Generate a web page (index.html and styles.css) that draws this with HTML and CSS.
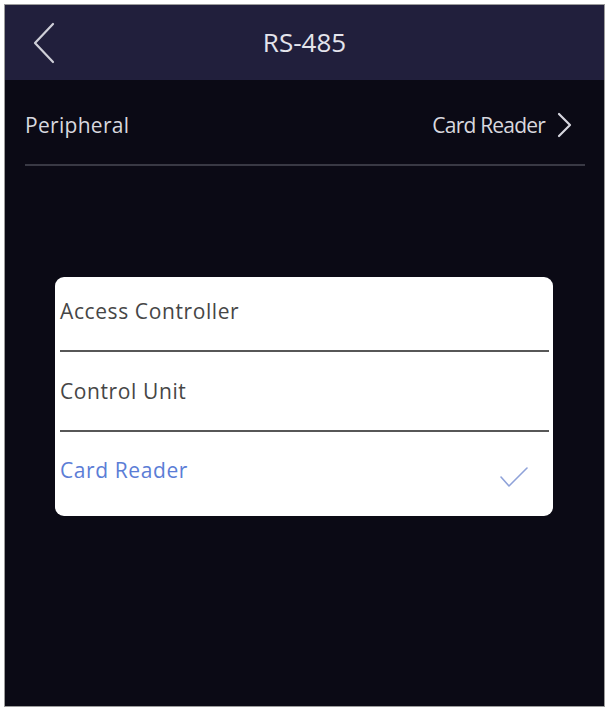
FILE: index.html
```html
<!DOCTYPE html>
<html lang="en">
<head>
	<meta charset="UTF-8">
	<title>RS-485</title>
	<link rel="stylesheet" href="styles.css">
</head>
<body>

	<div class="screen">
		<div class="topbar">
			<span class="back">
				<svg width="24" height="42" viewBox="0 0 24 42"><path d="M21 2 L3 21 L21 40" fill="none" stroke="#cfcfd8" stroke-width="2.2" stroke-linecap="round" stroke-linejoin="round"/></svg>
			</span>
			<span class="title">RS-485</span>
		</div>

		<div class="setting">
			<span class="label">Peripheral</span>
			<span class="value"><span>Card Reader</span>
				<svg width="16" height="26" viewBox="0 0 16 26"><path d="M2 2 L13 13 L2 24" fill="none" stroke="#d6d6de" stroke-width="2.2" stroke-linecap="round" stroke-linejoin="round"/></svg>
			</span>
		</div>
		<div class="line"></div>

		<!-- 选择外设 -->
		<div class="picker">
			<div class="option">Access Controller</div>
			<div class="option">Control Unit</div>
			<div class="option on">Card Reader
				<svg width="30" height="24" viewBox="0 0 30 24"><path d="M2 12 L10 21 L28 3" fill="none" stroke="#8fa2d9" stroke-width="1.6" stroke-linecap="round" stroke-linejoin="round"/></svg>
			</div>
		</div>
	</div>

</body>
</html>
```

FILE: styles.css
```css
html,body{margin: 0;padding: 0;background: #fff;}
body{padding: 4px 4px 2px 4px;font-family: "Open Sans", "Noto Sans", sans-serif;}
.screen{height: 703px;box-sizing: border-box;border: 1px solid #9c9c9c;background: #0b0a15;display: flex;flex-direction: column;}

.topbar{height: 75px;background: #211f3c;display: flex;align-items: center;position: relative;}
.topbar .back{position: absolute;left: 27px;top: 17px;}
.topbar .title{flex: 1;text-align: center;color: #e4e4ec;font-size: 26px;margin-top: -2px;}

.setting{height: 78px;padding: 6px 31px 0 20px;display: flex;align-items: center;justify-content: space-between;color: #d8d8df;font-size: 21px;}
.setting .label{letter-spacing: 0.3px;}
.setting .value{display: flex;align-items: center;gap: 12px;letter-spacing: -0.8px;}
.line{height: 2px;background: #393944;margin: 0 19px 0 20px;}

.picker{margin: 111px 51px 0 50px;background: #fff;border-radius: 9px;padding: 0 4px 0 5px;}
.picker .option{height: 78px;border-bottom: 2px solid #575757;display: flex;align-items: center;justify-content: space-between;color: #464646;font-size: 21px;letter-spacing: 0.6px;}
.picker .option:first-child{height: 67px;padding-bottom: 6px;}
.picker .option.on{height: 76px;padding-bottom: 8px;border-bottom: 0;color: #5b7dd6;}
.picker .option.on svg{margin: 14px 20px 0 0;}
```
